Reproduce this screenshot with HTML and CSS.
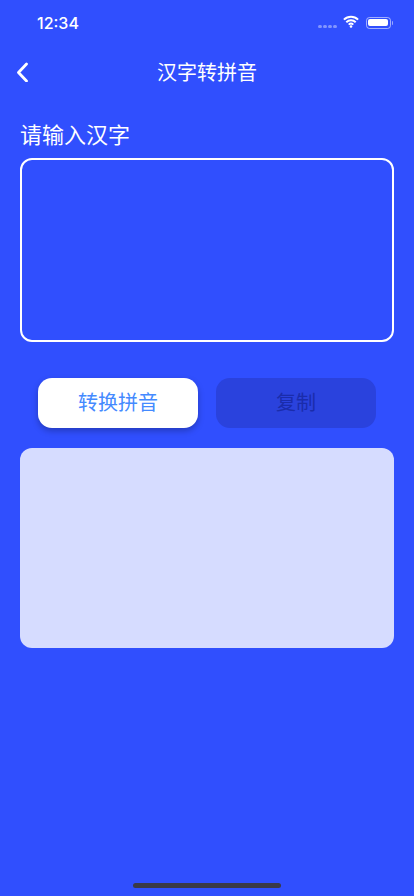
FILE: index.html
```html
<!DOCTYPE html>
<html lang="zh">
<head>
<meta charset="utf-8">
<title>汉字转拼音</title>
<link rel="stylesheet" href="styles.css">
</head>
<body>
<div class="screen">
  <div class="status">
    <span class="time">12:34</span>
    <div class="status-icons">
      <span class="signal"><i></i><i></i><i></i><i></i></span>
      <svg class="wifi" viewBox="0 0 16 13" width="16" height="13"><path d="M.9 4.6a10.2 10.2 0 0 1 14.2 0M3.3 7.2a6.8 6.8 0 0 1 9.4 0M5.7 9.6a3.3 3.3 0 0 1 4.6 0" fill="none" stroke="#fff" stroke-width="2"/><circle cx="8" cy="11.5" r="1.3" fill="#fff"/></svg>
      <span class="battery"><span class="level"></span></span>
      <span class="cap"></span>
    </div>
  </div>
  <header class="nav">
    <svg class="back" viewBox="0 0 14 20" width="14" height="20"><path d="M11.5 2 3.5 10.5 11.5 19" fill="none" stroke="#fff" stroke-width="2.8" stroke-linecap="round" stroke-linejoin="round"/></svg>
    <h1 class="title">汉字转拼音</h1>
  </header>
  <main class="content">
    <label class="label">请输入汉字</label>
    <div class="input"></div>
    <div class="actions">
      <button class="btn primary">转换拼音</button>
      <button class="btn disabled">复制</button>
    </div>
    <div class="result"></div>
  </main>
  <div class="home"></div>
</div>
</body>
</html>
```
FILE: styles.css
```css
* { box-sizing: border-box; }
html, body { margin: 0; padding: 0; }
body { font-family: "Inter", "Noto Sans CJK SC", sans-serif; background: #304ffe; }
.screen { width: 414px; height: 896px; background: #304ffe; color: #fff; display: flex; flex-direction: column; position: relative; overflow: hidden; }
.status { height: 44px; display: flex; justify-content: space-between; align-items: center; padding: 1px 21px 0 37px; }
.time { font-size: 16px; font-weight: 500; }
.status-icons { display: flex; align-items: center; }
.signal { display: flex; gap: 1.5px; margin: 8px 6px 0 0; }
.signal i { width: 3.5px; height: 3.5px; border-radius: 50%; background: rgba(255,255,255,.4); }
.wifi { margin: -3px 7px 0 0; }
.battery { width: 25px; height: 12px; border: 1px solid rgba(255,255,255,.55); border-radius: 3.5px; padding: 1.5px; display: flex; }
.level { flex: 1; background: #fff; border-radius: 2px; }
.cap { width: 1.5px; height: 4px; margin-left: 1px; background: rgba(255,255,255,.5); border-radius: 0 1px 1px 0; }
.nav { height: 56px; display: flex; align-items: center; justify-content: center; position: relative; }
.back { position: absolute; left: 15px; top: 18px; }
.title { margin: 0; font-size: 20px; font-weight: 400; line-height: 56px; font-family: "Noto Sans CJK SC", sans-serif; }
.content { padding: 20px 20px 0; display: flex; flex-direction: column; }
.label { font-size: 22px; line-height: 30px; margin-top: -2px; font-weight: 400; font-family: "Noto Sans CJK SC", sans-serif; height: 36px; margin-bottom: 4px; }
.input { height: 184px; border: 2px solid #fff; border-radius: 12px; }
.actions { display: flex; justify-content: space-between; padding: 0 18px; margin-top: 36px; }
.btn { width: 160px; height: 50px; border: 0; border-radius: 14px; font-size: 20px; line-height: 48px; font-weight: 400; font-family: "Noto Sans CJK SC", sans-serif; padding: 0 0 2px; }
.primary { background: #fff; color: #448aff; box-shadow: 0 3px 6px rgba(0,0,0,.25); }
.disabled { background: #2a42dd; color: #1a2cab; }
.result { height: 200px; margin-top: 20px; border-radius: 12px; background: #d6dcff; }
.home { position: absolute; left: 133px; bottom: 8px; width: 148px; height: 5px; border-radius: 3px; background: #3a3a48; }
```
